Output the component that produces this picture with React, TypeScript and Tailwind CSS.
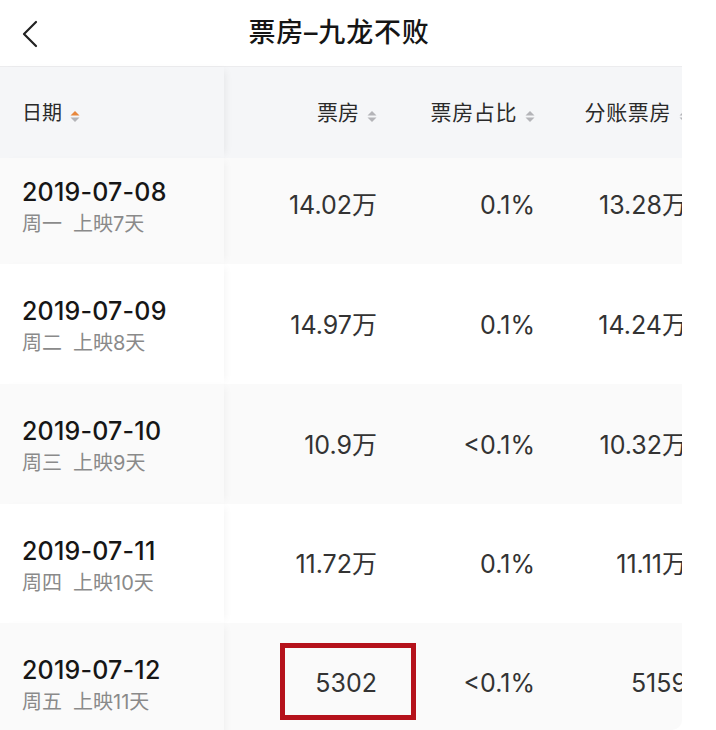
import React from "react";

const LATIN = { fontFamily: 'Inter, "Noto Sans CJK SC", sans-serif' };

function SortIcon({ active = false }: { active?: boolean }) {
  return (
    <svg width="10" height="11" viewBox="0 0 10 11" className="ml-[8px] mt-[7px] shrink-0">
      <path d="M0.5 4.6 L5 0 L9.5 4.6 Z" fill={active ? "#e8873d" : "#b4b4b8"} />
      <path d="M0.5 6.4 L5 11 L9.5 6.4 Z" fill="#b4b4b8" />
    </svg>
  );
}

type Row = { date: string; week: string; days: string; a: string; b: string; c: string };

const rows: Row[] = [
  { date: "2019-07-08", week: "周一", days: "上映7天", a: "14.02万", b: "0.1%", c: "13.28万" },
  { date: "2019-07-09", week: "周二", days: "上映8天", a: "14.97万", b: "0.1%", c: "14.24万" },
  { date: "2019-07-10", week: "周三", days: "上映9天", a: "10.9万", b: "<0.1%", c: "10.32万" },
  { date: "2019-07-11", week: "周四", days: "上映10天", a: "11.72万", b: "0.1%", c: "11.11万" },
  { date: "2019-07-12", week: "周五", days: "上映11天", a: "5302", b: "<0.1%", c: "5159" },
];

const heights = ["h-[106px]", "h-[120px]", "h-[120px]", "h-[119px]", "h-[120px]"];
const pads = ["pb-[10px]", "pt-[3px]", "pt-[3px]", "pt-[3px]", "pt-[2px]"];

export default function App() {
  return (
    <div className="w-[716px] h-[730px] bg-white overflow-hidden flex" style={LATIN}>
      <div className="w-[682px] shrink-0 overflow-hidden rounded-br-[10px] flex flex-col">
        {/* Nav bar */}
        <div className="h-[67px] shrink-0 grid grid-cols-[1fr_auto_1fr] items-center border-b border-[#ececee] bg-white">
          <div className="pl-[21px] pt-[1px]">
            <svg width="18" height="28" viewBox="0 0 18 28">
              <path d="M15 2 L3 14 L15 26" fill="none" stroke="#222" strokeWidth="2.2" strokeLinecap="round" strokeLinejoin="round" />
            </svg>
          </div>
          <div className="text-[27px] font-medium text-[#151515] tracking-[0.8px] pr-[4px]">票房–九龙不败</div>
          <div />
        </div>

        {/* Header row */}
        <div className="h-[91px] shrink-0 flex bg-[#f5f6f8]">
          <div className="w-[224px] shrink-0 flex items-center pl-[22px] relative z-10 shadow-[5px_0_8px_-4px_rgba(0,0,0,0.07)] bg-[#f5f6f8]">
            <span className="text-[20px] text-[#2a2a2a]">日期</span>
            <SortIcon active />
          </div>
          <div className="w-[168px] shrink-0 flex items-center justify-end pr-[15px]">
            <span className="text-[21px] text-[#2a2a2a]">票房</span>
            <SortIcon />
          </div>
          <div className="w-[159px] shrink-0 flex items-center justify-end pr-[16px]">
            <span className="text-[21px] text-[#2a2a2a] tracking-[0.6px]">票房占比</span>
            <SortIcon />
          </div>
          <div className="w-[159px] shrink-0 flex items-center justify-end pr-[21px]">
            <span className="text-[21px] text-[#2a2a2a] tracking-[0.6px]">分账票房</span>
            <SortIcon />
          </div>
        </div>

        {/* Body rows */}
        {rows.map((r, i) => {
          const bg = i % 2 === 0 ? "bg-[#fafafa]" : "bg-white";
          return (
            <div key={r.date} className={`${heights[i]} shrink-0 flex ${bg}`}>
              <div className={`w-[224px] shrink-0 flex flex-col justify-center pl-[22px] relative z-10 shadow-[5px_0_8px_-4px_rgba(0,0,0,0.05)] ${bg} ${pads[i]}`}>
                <div className="text-[25px] leading-[30px] font-medium text-[#161616] tracking-[0.2px]">{r.date}</div>
                <div className="text-[20px] leading-[24px] mt-[5px] text-[#8a8a8a] flex">
                  <span>{r.week}</span>
                  <span className="ml-[11px]">{r.days}</span>
                </div>
              </div>
              <div className={`w-[168px] shrink-0 flex items-center justify-end pr-[15px] relative ${pads[i]}`}>
                <span className="text-[25px] text-[#333]">{r.a}</span>
                {i === 4 && (
                  <div className="absolute left-[56px] top-[20px] w-[136px] h-[77px] border-[5px] border-[#b5121b]" />
                )}
              </div>
              <div className={`w-[159px] shrink-0 flex items-center justify-end pr-[16px] ${pads[i]}`}>
                <span className="text-[25px] text-[#333]">{r.b}</span>
              </div>
              <div className={`w-[159px] shrink-0 flex items-center justify-end pr-[23px] ${pads[i]}`}>
                <span className="text-[25px] text-[#333] whitespace-nowrap">{r.c}</span>
              </div>
            </div>
          );
        })}
      </div>
      <div className="flex-1 bg-white" />
    </div>
  );
}
